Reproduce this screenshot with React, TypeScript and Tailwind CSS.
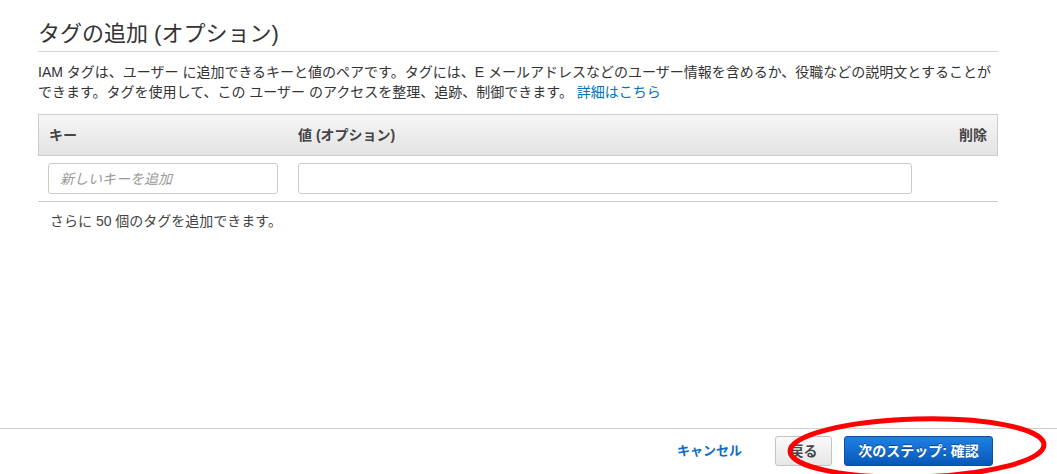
import React from 'react';

const FONT = 'font-["Liberation_Sans","Noto_Sans_CJK_JP",sans-serif]';

export default function App() {
  return (
    <div className={`${FONT} relative flex h-[474px] w-[1057px] flex-col bg-white text-[#444]`}>
      <main className="flex-1 px-[38px] pt-[20px] pr-[59px]">
        <h2 className="border-b border-[#d5d5d5] pb-[3px] text-[22px] leading-[28px] font-normal text-[#333]">
          タグの追加 (オプション)
        </h2>
        <p className="mt-[10px] whitespace-nowrap text-[14px] leading-[20px] text-[#333]">
          IAM タグは、ユーザー に追加できるキーと値のペアです。タグには、E メールアドレスなどのユーザー情報を含めるか、役職などの説明文とすることが
          <br />
          できます。タグを使用して、この ユーザー のアクセスを整理、追跡、制御できます。 <a className="text-[#0073bb]">詳細はこちら</a>
        </p>

        <div className="mt-[12px]">
          <div className="flex h-[42px] items-center border border-[#ccc] bg-gradient-to-b from-[#f6f6f6] to-[#e3e3e3] text-[14px] font-bold text-[#444]">
            <div className="w-[249px] pl-[10px]">キー</div>
            <div className="flex-1 pl-[10px]">値 (オプション)</div>
            <div className="w-[76px] pr-[10px] text-right">削除</div>
          </div>
          <div className="flex h-[46px] items-center border-b border-[#ccc]">
            <div className="w-[250px] pl-[10px]">
              <input
                placeholder="新しいキーを追加"
                className="h-[31px] w-[230px] rounded-[3px] border border-[#ccc] px-[11px] text-[14px] placeholder:italic placeholder:text-[#999] outline-none"
              />
            </div>
            <div className="flex-1 pl-[10px]">
              <input className="h-[31px] w-full rounded-[3px] border border-[#ccc] px-[11px] text-[14px] outline-none" />
            </div>
            <div className="w-[86px]" />
          </div>
          <p className="mt-[9px] pl-[12px] text-[14px] leading-[20px] text-[#444]">さらに 50 個のタグを追加できます。</p>
        </div>
      </main>

      <footer className="flex h-[46px] items-start justify-end gap-[12px] border-t border-[#d0d0d0] pr-[64px] pt-[7px]">
        <button className="mr-[21px] h-[30px] text-[13px] font-bold text-[#0f6bc4]">キャンセル</button>
        <button className="h-[30px] w-[57px] rounded-[3px] border border-[#c4c4c4] bg-gradient-to-b from-[#fafafa] to-[#e6e6e6] text-[14px] font-bold text-[#444]">
          戻る
        </button>
        <button className="h-[30px] w-[149px] rounded-[3px] border border-[#0b4f9c] bg-gradient-to-b from-[#1f80e4] to-[#0758b8] text-[14px] font-bold text-white [text-shadow:0_-1px_0_rgba(0,0,0,0.4)]">
          次のステップ: 確認
        </button>
      </footer>

      <svg className="pointer-events-none absolute left-0 top-0" width="1057" height="474" viewBox="0 0 1057 474">
        <ellipse cx="917" cy="448" rx="127" ry="29" fill="none" stroke="#f00" strokeWidth="5" transform="rotate(-1.5 917 448)" />
      </svg>
    </div>
  );
}
